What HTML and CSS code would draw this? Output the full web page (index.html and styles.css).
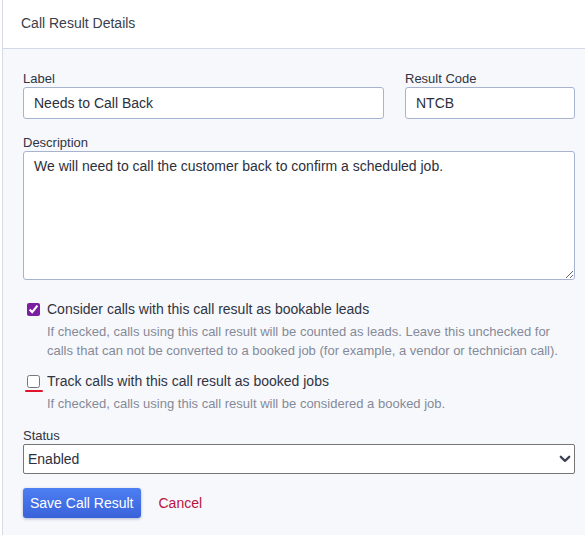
FILE: index.html
```html
<!DOCTYPE html>
<html>
<head>
<meta charset="utf-8">
<link rel="stylesheet" href="styles.css">
</head>
<body>
<div class="panel">
  <div class="panel-header">Call Result Details</div>
  <div class="panel-body">
    <div class="row">
      <div class="field">
        <label class="lbl">Label</label>
        <input class="input" type="text" value="Needs to Call Back">
      </div>
      <div class="field">
        <label class="lbl">Result Code</label>
        <input class="input" type="text" value="NTCB">
      </div>
    </div>
    <div class="field">
      <label class="lbl">Description</label>
      <textarea class="input textarea">We will need to call the customer back to confirm a scheduled job.</textarea>
    </div>
    <div class="check first">
      <div class="check-line">
        <input type="checkbox" class="cb" checked>
        <span class="check-text">Consider calls with this call result as bookable leads</span>
      </div>
      <div class="help">If checked, calls using this call result will be counted as leads. Leave this unchecked for calls that can not be converted to a booked job (for example, a vendor or technician call).</div>
    </div>
    <div class="check">
      <div class="check-line">
        <span class="cb-wrap marked"><input type="checkbox" class="cb"></span>
        <span class="check-text">Track calls with this call result as booked jobs</span>
      </div>
      <div class="help">If checked, calls using this call result will be considered a booked job.</div>
    </div>
    <div class="field status">
      <label class="lbl">Status</label>
      <div class="select-wrap">
        <select class="select"><option>Enabled</option><option>Disabled</option></select>
        <svg class="chev" width="12" height="8" viewBox="0 0 12 8"><path d="M1.8 1.8 L6 5.8 L10.2 1.8" fill="none" stroke="#3f4454" stroke-width="2.3" stroke-linecap="round" stroke-linejoin="round"/></svg>
      </div>
    </div>
    <div class="actions">
      <button class="btn">Save Call Result</button>
      <a class="cancel" href="#">Cancel</a>
    </div>
  </div>
</div>
</body>
</html>
```
FILE: styles.css
```css
html, body {
  margin: 0;
  padding: 0;
  height: 100%;
  background: #ffffff;
  font-family: "Liberation Sans", Arial, sans-serif;
  color: #2f3442;
}
.panel {
  margin-left: 2px;
  border-left: 1px solid #d8dbe6;
  min-height: 100%;
  background: #f7f8fc;
  box-sizing: border-box;
}
.panel-header {
  background: #ffffff;
  height: 49px;
  box-sizing: border-box;
  border-bottom: 1px solid #d3d8e6;
  padding-left: 18px;
  padding-bottom: 2px;
  display: flex;
  align-items: center;
  font-size: 14px;
  color: #3a3f4c;
}
.panel-body {
  padding: 22px 10px 20px 20px;
}
.row {
  display: grid;
  grid-template-columns: 361px minmax(0, 1fr);
  gap: 21px;
}
.field {
  display: flex;
  flex-direction: column;
  margin-bottom: 16px;
  min-width: 0;
}
.lbl {
  font-size: 13px;
  color: #30343f;
  line-height: 15px;
  margin-bottom: 1px;
}
.input {
  width: 100%;
  height: 32px;
  box-sizing: border-box;
  border: 1px solid #a8b3cf;
  border-radius: 3px;
  background: #ffffff;
  font-family: "Liberation Sans", Arial, sans-serif;
  font-size: 14px;
  color: #2c303c;
  padding: 0 10px;
  outline: none;
}
.textarea {
  height: 129px;
  padding: 6px 10px;
  line-height: 16px;
  resize: vertical;
}
.check {
  margin-top: 6px;
  margin-bottom: 12px;
}
.check.first {
  margin-top: 20px;
}
.check-line {
  display: flex;
  align-items: center;
  height: 18px;
}
.cb {
  width: 13px;
  height: 13px;
  margin: 0 7px 0 4px;
  accent-color: #7b1fa2;
}
.cb-wrap {
  position: relative;
  display: inline-flex;
}
.cb-wrap.marked::after {
  content: "";
  position: absolute;
  left: 2px;
  top: 15px;
  width: 18px;
  height: 2px;
  border-radius: 2px;
  background: #e0142a;
}
.check-text {
  font-size: 14px;
  color: #2f3442;
}
.help {
  margin-left: 24px;
  margin-top: 4px;
  font-size: 13px;
  line-height: 19px;
  color: #858a98;
}
.status {
  margin-top: 15px;
  margin-bottom: 14px;
}
.select-wrap {
  position: relative;
}
.select {
  width: 100%;
  height: 30px;
  box-sizing: border-box;
  appearance: none;
  -webkit-appearance: none;
  border: 1px solid #767676;
  border-radius: 2px;
  background: #ffffff;
  font-family: "Liberation Sans", Arial, sans-serif;
  font-size: 14px;
  color: #2c303c;
  padding: 0 4px;
  outline: none;
}
.chev {
  position: absolute;
  right: 4px;
  top: 11px;
  pointer-events: none;
}
.actions {
  display: flex;
  align-items: center;
  gap: 18px;
}
.btn {
  height: 30px;
  padding: 0 7px;
  border: none;
  border-radius: 3px;
  background: linear-gradient(#4c7ff2, #3a62da);
  color: #ffffff;
  font-family: "Liberation Sans", Arial, sans-serif;
  font-size: 14px;
  box-shadow: 0 1px 3px rgba(40, 60, 120, 0.35);
}
.cancel {
  color: #b8133f;
  text-decoration: none;
  font-size: 14px;
}
```
